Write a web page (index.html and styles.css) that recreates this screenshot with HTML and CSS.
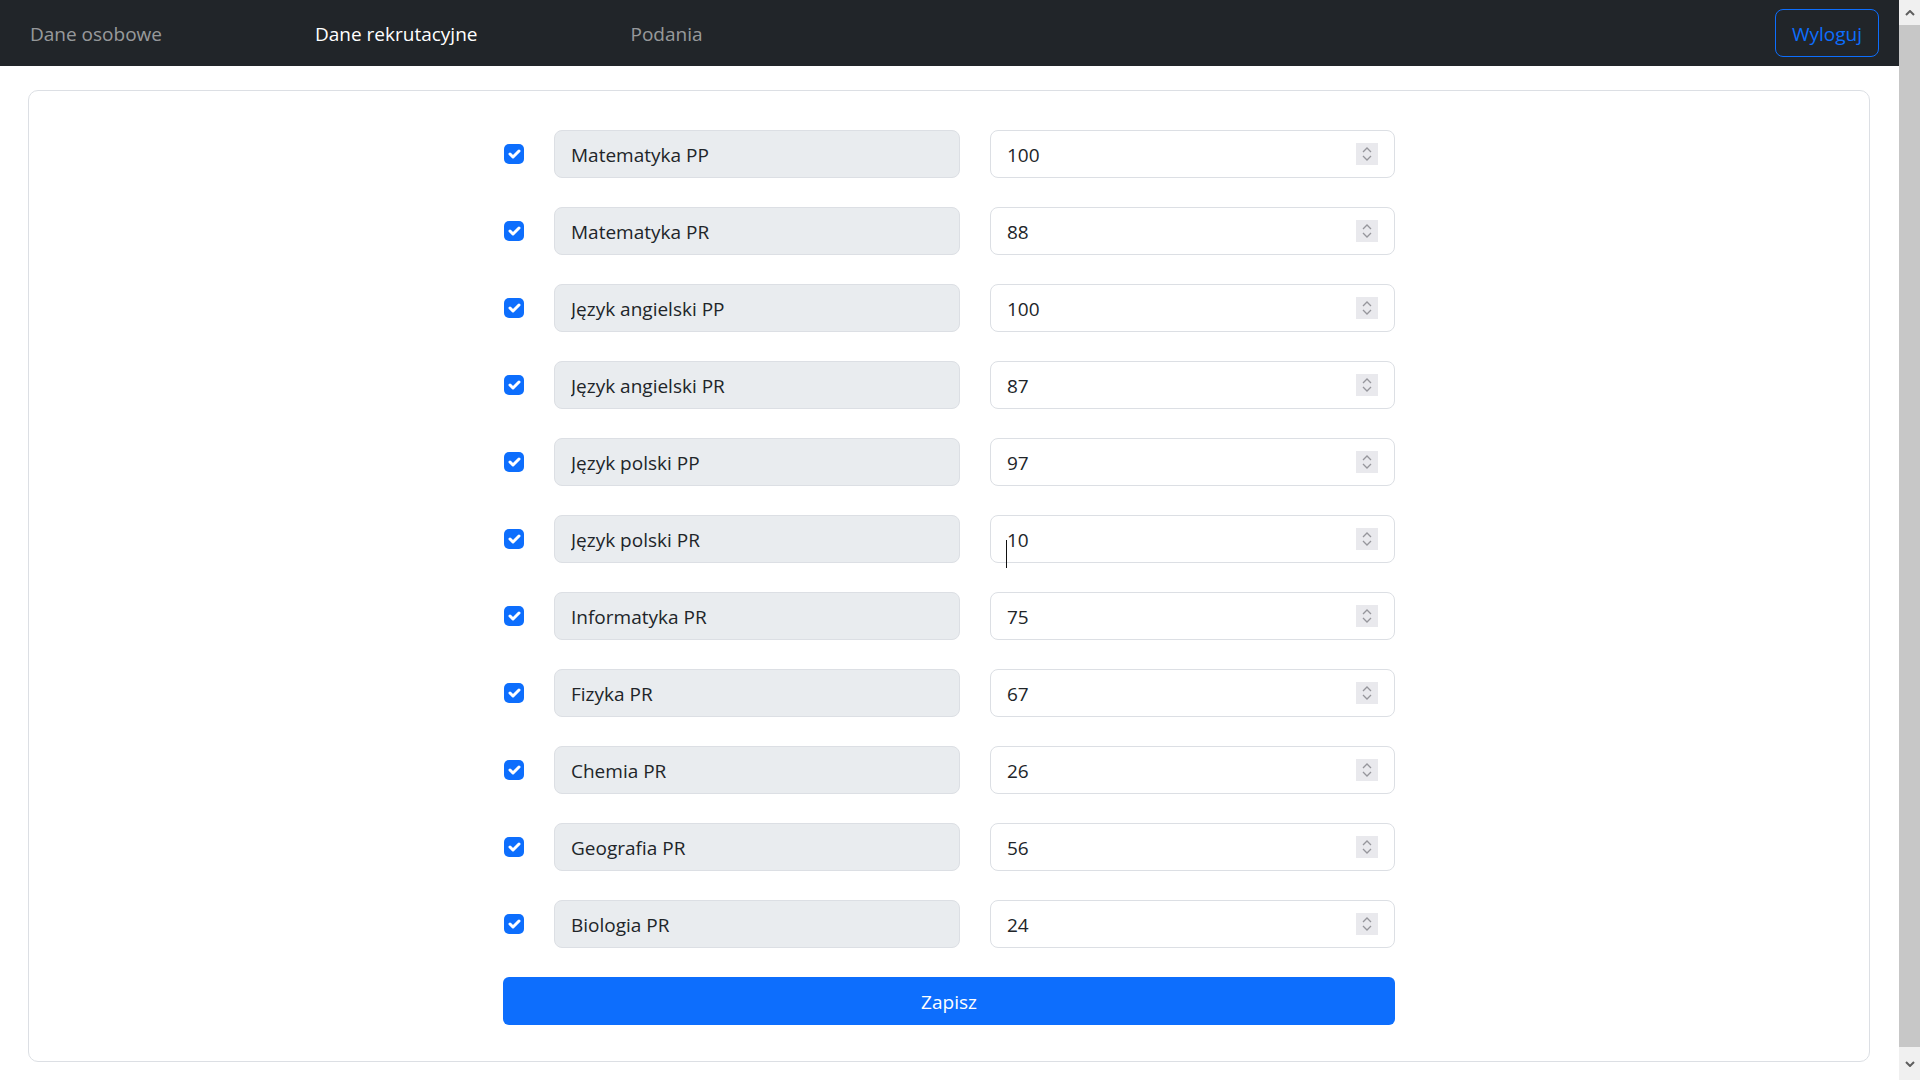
FILE: index.html
```html
<!DOCTYPE html>
<html lang="pl">
<head>
<meta charset="utf-8">
<title>Dane rekrutacyjne</title>
<link rel="stylesheet" href="styles.css">
</head>
<body>
<div class="page">
  <nav class="navbar">
    <ul class="nav-links">
      <li><a class="nav-link" href="#">Dane osobowe</a></li>
      <li><a class="nav-link active" href="#">Dane rekrutacyjne</a></li>
      <li><a class="nav-link" href="#">Podania</a></li>
    </ul>
    <button class="btn-logout" type="button">Wyloguj</button>
  </nav>

  <main class="card">
    <form class="grades">
      <div class="row">
        <svg class="check" viewBox="0 0 20 20" width="20" height="20"><rect width="20" height="20" rx="5" fill="#0d6efd"/><path d="m6 10 3 3 6-6" fill="none" stroke="#fff" stroke-width="3" stroke-linecap="round" stroke-linejoin="round"/></svg>
        <input class="subject" type="text" value="Matematyka PP" readonly>
        <div class="num"><input type="text" value="100"><span class="spin"><svg viewBox="0 0 22 22" width="22" height="22"><path d="M7 9l4-4 4 4M7 13l4 4 4-4"/></svg></span></div>
      </div>
      <div class="row">
        <svg class="check" viewBox="0 0 20 20" width="20" height="20"><rect width="20" height="20" rx="5" fill="#0d6efd"/><path d="m6 10 3 3 6-6" fill="none" stroke="#fff" stroke-width="3" stroke-linecap="round" stroke-linejoin="round"/></svg>
        <input class="subject" type="text" value="Matematyka PR" readonly>
        <div class="num"><input type="text" value="88"><span class="spin"><svg viewBox="0 0 22 22" width="22" height="22"><path d="M7 9l4-4 4 4M7 13l4 4 4-4"/></svg></span></div>
      </div>
      <div class="row">
        <svg class="check" viewBox="0 0 20 20" width="20" height="20"><rect width="20" height="20" rx="5" fill="#0d6efd"/><path d="m6 10 3 3 6-6" fill="none" stroke="#fff" stroke-width="3" stroke-linecap="round" stroke-linejoin="round"/></svg>
        <input class="subject" type="text" value="Język angielski PP" readonly>
        <div class="num"><input type="text" value="100"><span class="spin"><svg viewBox="0 0 22 22" width="22" height="22"><path d="M7 9l4-4 4 4M7 13l4 4 4-4"/></svg></span></div>
      </div>
      <div class="row">
        <svg class="check" viewBox="0 0 20 20" width="20" height="20"><rect width="20" height="20" rx="5" fill="#0d6efd"/><path d="m6 10 3 3 6-6" fill="none" stroke="#fff" stroke-width="3" stroke-linecap="round" stroke-linejoin="round"/></svg>
        <input class="subject" type="text" value="Język angielski PR" readonly>
        <div class="num"><input type="text" value="87"><span class="spin"><svg viewBox="0 0 22 22" width="22" height="22"><path d="M7 9l4-4 4 4M7 13l4 4 4-4"/></svg></span></div>
      </div>
      <div class="row">
        <svg class="check" viewBox="0 0 20 20" width="20" height="20"><rect width="20" height="20" rx="5" fill="#0d6efd"/><path d="m6 10 3 3 6-6" fill="none" stroke="#fff" stroke-width="3" stroke-linecap="round" stroke-linejoin="round"/></svg>
        <input class="subject" type="text" value="Język polski PP" readonly>
        <div class="num"><input type="text" value="97"><span class="spin"><svg viewBox="0 0 22 22" width="22" height="22"><path d="M7 9l4-4 4 4M7 13l4 4 4-4"/></svg></span></div>
      </div>
      <div class="row">
        <svg class="check" viewBox="0 0 20 20" width="20" height="20"><rect width="20" height="20" rx="5" fill="#0d6efd"/><path d="m6 10 3 3 6-6" fill="none" stroke="#fff" stroke-width="3" stroke-linecap="round" stroke-linejoin="round"/></svg>
        <input class="subject" type="text" value="Język polski PR" readonly>
        <div class="num"><input type="text" value="10"><span class="spin"><svg viewBox="0 0 22 22" width="22" height="22"><path d="M7 9l4-4 4 4M7 13l4 4 4-4"/></svg></span><span class="ibeam"></span></div>
      </div>
      <div class="row">
        <svg class="check" viewBox="0 0 20 20" width="20" height="20"><rect width="20" height="20" rx="5" fill="#0d6efd"/><path d="m6 10 3 3 6-6" fill="none" stroke="#fff" stroke-width="3" stroke-linecap="round" stroke-linejoin="round"/></svg>
        <input class="subject" type="text" value="Informatyka PR" readonly>
        <div class="num"><input type="text" value="75"><span class="spin"><svg viewBox="0 0 22 22" width="22" height="22"><path d="M7 9l4-4 4 4M7 13l4 4 4-4"/></svg></span></div>
      </div>
      <div class="row">
        <svg class="check" viewBox="0 0 20 20" width="20" height="20"><rect width="20" height="20" rx="5" fill="#0d6efd"/><path d="m6 10 3 3 6-6" fill="none" stroke="#fff" stroke-width="3" stroke-linecap="round" stroke-linejoin="round"/></svg>
        <input class="subject" type="text" value="Fizyka PR" readonly>
        <div class="num"><input type="text" value="67"><span class="spin"><svg viewBox="0 0 22 22" width="22" height="22"><path d="M7 9l4-4 4 4M7 13l4 4 4-4"/></svg></span></div>
      </div>
      <div class="row">
        <svg class="check" viewBox="0 0 20 20" width="20" height="20"><rect width="20" height="20" rx="5" fill="#0d6efd"/><path d="m6 10 3 3 6-6" fill="none" stroke="#fff" stroke-width="3" stroke-linecap="round" stroke-linejoin="round"/></svg>
        <input class="subject" type="text" value="Chemia PR" readonly>
        <div class="num"><input type="text" value="26"><span class="spin"><svg viewBox="0 0 22 22" width="22" height="22"><path d="M7 9l4-4 4 4M7 13l4 4 4-4"/></svg></span></div>
      </div>
      <div class="row">
        <svg class="check" viewBox="0 0 20 20" width="20" height="20"><rect width="20" height="20" rx="5" fill="#0d6efd"/><path d="m6 10 3 3 6-6" fill="none" stroke="#fff" stroke-width="3" stroke-linecap="round" stroke-linejoin="round"/></svg>
        <input class="subject" type="text" value="Geografia PR" readonly>
        <div class="num"><input type="text" value="56"><span class="spin"><svg viewBox="0 0 22 22" width="22" height="22"><path d="M7 9l4-4 4 4M7 13l4 4 4-4"/></svg></span></div>
      </div>
      <div class="row">
        <svg class="check" viewBox="0 0 20 20" width="20" height="20"><rect width="20" height="20" rx="5" fill="#0d6efd"/><path d="m6 10 3 3 6-6" fill="none" stroke="#fff" stroke-width="3" stroke-linecap="round" stroke-linejoin="round"/></svg>
        <input class="subject" type="text" value="Biologia PR" readonly>
        <div class="num"><input type="text" value="24"><span class="spin"><svg viewBox="0 0 22 22" width="22" height="22"><path d="M7 9l4-4 4 4M7 13l4 4 4-4"/></svg></span></div>
      </div>
      <button class="btn-save" type="button">Zapisz</button>
    </form>
  </main>
</div>

<div class="scrollbar">
  <div class="sb-btn sb-up"><svg viewBox="0 0 10 6" width="10" height="6"><path d="M1 5l4-4 4 4"/></svg></div>
  <div class="sb-thumb"></div>
  <div class="sb-btn sb-down"><svg viewBox="0 0 10 6" width="10" height="6"><path d="M1 1l4 4 4-4"/></svg></div>
</div>
</body>
</html>
```

FILE: styles.css
```css
html, body {
  margin: 0;
  padding: 0;
}

body {
  display: flex;
  height: 100vh;
  overflow: hidden;
  background: #fff;
  color: #212529;
  font-family: "Open Sans", "Noto Sans", sans-serif;
  font-size: 19px;
}

.page {
  flex: 1;
  min-width: 0;
  display: flex;
  flex-direction: column;
}

/* Navbar */
.navbar {
  height: 66px;
  flex: none;
  box-sizing: border-box;
  background: #212529;
  display: flex;
  align-items: center;
  justify-content: space-between;
  padding: 0 20px 0 30px;
}

.nav-links {
  display: flex;
  gap: 153px;
  list-style: none;
  margin: 0;
  padding: 2px 0 0;
}

.nav-link {
  color: rgba(255, 255, 255, 0.55);
  text-decoration: none;
  font-size: 19px;
  line-height: 30px;
}

.nav-link.active {
  color: #fff;
}

.btn-logout {
  height: 48px;
  box-sizing: border-box;
  padding: 2px 16px 0;
  border: 1px solid #0d6efd;
  border-radius: 8px;
  background: transparent;
  color: #0d6efd;
  font: inherit;
  font-size: 19px;
  line-height: 30px;
}

/* Card */
.card {
  margin: 24px 29px 0 28px;
  border: 1px solid #dcdfe4;
  border-radius: 10px;
  padding: 39px 0 36px;
}

.grades {
  width: 892px;
  margin: 0 auto;
  display: flex;
  flex-direction: column;
  gap: 29px;
}

.row {
  display: grid;
  grid-template-columns: 21px 406px 1fr;
  column-gap: 30px;
  align-items: center;
}

.check {
  justify-self: end;
  display: block;
}

.subject,
.num {
  height: 48px;
  box-sizing: border-box;
  border: 1px solid #dcdfe4;
  border-radius: 8px;
}

.subject {
  width: 100%;
  padding: 2px 16px 0;
  background: #e9ecef;
  color: #212529;
  font: inherit;
  font-size: 19px;
  outline: none;
}

.num {
  position: relative;
  display: flex;
  align-items: center;
  padding: 0 16px;
  background: #fff;
}

.num input {
  flex: 1;
  min-width: 0;
  border: 0;
  padding: 2px 0 0;
  background: transparent;
  color: #212529;
  font: inherit;
  font-size: 19px;
  outline: none;
}

.spin {
  width: 22px;
  height: 22px;
  background: #e9e9ed;
  display: flex;
}

.spin svg path {
  fill: none;
  stroke: #96969c;
  stroke-width: 1.3;
}

.ibeam {
  position: absolute;
  left: 15px;
  top: 24px;
  width: 1px;
  height: 28px;
  background: #111;
}

.btn-save {
  height: 48px;
  border: 0;
  border-radius: 6px;
  padding: 2px 0 0;
  background: #0d6efd;
  color: #fff;
  font: inherit;
  font-size: 19px;
  line-height: 30px;
}

/* Window scrollbar */
.scrollbar {
  width: 21px;
  flex: none;
  display: flex;
  flex-direction: column;
  background: #f0f0f0;
}

.sb-btn {
  display: flex;
  align-items: center;
  justify-content: center;
}

.sb-up {
  height: 25px;
}

.sb-down {
  height: 33px;
}

.sb-btn svg path {
  fill: none;
  stroke: #5f5f5f;
  stroke-width: 2;
}

.sb-thumb {
  flex: 1;
  background: #c7c7c7;
}
```
